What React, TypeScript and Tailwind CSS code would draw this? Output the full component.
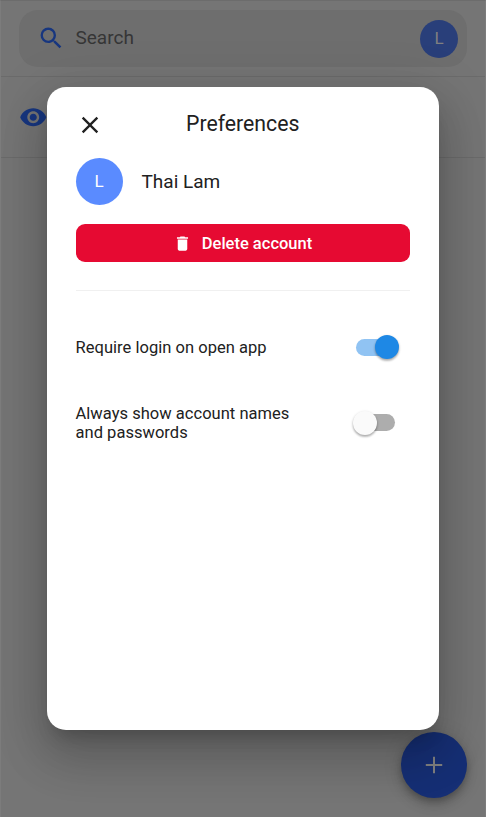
import type { ReactNode } from "react";
import { MdClose, MdDelete, MdRemoveRedEye, MdSearch } from "react-icons/md";

function Avatar({ className }: { className: string }) {
  return <div className={`flex shrink-0 items-center justify-center rounded-full ${className}`}>L</div>;
}

function Toggle({ on }: { on: boolean }) {
  return (
    <div
      className={`flex h-[17px] w-[39px] items-center rounded-full ${
        on ? "justify-end bg-[#90c3f3]" : "justify-start bg-[#adadad]"
      }`}
    >
      <div
        className={`size-6 shrink-0 rounded-full shadow-[0_2px_2px_rgba(0,0,0,0.2),0_1px_3px_rgba(0,0,0,0.2)] ${
          on ? "-mr-[4px] bg-[#1e88e5]" : "-ml-[3.5px] bg-[#fafafa]"
        }`}
      />
    </div>
  );
}

function Setting({ children, on, className }: { children: ReactNode; on: boolean; className: string }) {
  return (
    <div className={`flex items-center justify-between ${className}`}>
      <div className="text-[16.5px] leading-[19px] tracking-[0.03px]">{children}</div>
      <Toggle on={on} />
    </div>
  );
}

export default function App() {
  return (
    <div className="relative h-[817px] w-[486px] overflow-hidden border-x border-t border-x-[#7c7c7c] border-t-[#6c6c6c] bg-[#757575] font-[Roboto,sans-serif] text-[#212121]">
      <header className="border-b border-[#6b6b6b] px-[18px] pt-[9px] pb-[9px]">
        <div className="flex h-[57px] items-center rounded-[19px] bg-[#6e6e6e] pr-[9px] pl-[18.4px]">
          <MdSearch className="size-[28.5px] text-[#17367f]" />
          <span className="ml-[9.6px] flex-1 text-[19px] text-[#363636]">Search</span>
          <Avatar className="size-[38px] bg-[#293f7a] text-[17px] text-[#808080]" />
        </div>
      </header>
      <div className="flex h-[81px] items-center border-b border-[#6b6b6b] pl-[18.4px]">
        <MdRemoveRedEye className="size-[28.5px] text-[#17367f]" />
      </div>

      <button className="absolute top-[731px] left-[400px] flex size-[66px] items-center justify-center rounded-full bg-[#162f75] text-[#808080] shadow-[0_4px_6px_-1px_rgba(0,0,0,0.2),0_7px_12px_rgba(0,0,0,0.14),0_1px_20px_rgba(0,0,0,0.12)]">
        <svg viewBox="0 0 28 28" className="size-[28px]" stroke="currentColor" strokeWidth="2">
          <path d="M5.8 14H22.2M14 5.8V22.2" />
        </svg>
      </button>

      <section className="absolute top-[86px] left-[46px] h-[643.4px] w-[391.5px] rounded-[19px] bg-white px-[28.5px] shadow-[0_13px_18px_-8px_rgba(0,0,0,0.2),0_28px_45px_4px_rgba(0,0,0,0.14),0_11px_54px_9px_rgba(0,0,0,0.12)]">
        <div className="grid h-[71px] grid-cols-[28px_1fr_28px] items-center pt-[3px]">
          <MdClose className="mt-px size-[28px]" />
          <h1 className="text-center text-[21.25px]">Preferences</h1>
        </div>
        <div className="flex items-center gap-[19px] text-[19px]">
          <Avatar className="size-[47px] bg-[#5a8bff] text-[17px] text-white" />
          <span className="pt-px">Thai Lam</span>
        </div>
        <button className="mt-[19px] flex h-[38px] w-full items-center justify-center gap-[9.5px] rounded-[9px] bg-[#e60a32] text-[16.5px] font-medium text-white">
          <MdDelete className="size-[19px]" />
          <span className="pt-[2px]">Delete account</span>
        </button>
        <div className="mt-[28px] h-px bg-[#f0f0f0]" />
        <Setting on className="mt-[27px] h-[58px] pr-[15px]">Require login on open app</Setting>
        <Setting on={false} className="mt-[18px] h-[57px] pr-[15px]">
          Always show account names<br />and passwords
        </Setting>
      </section>
    </div>
  );
}
